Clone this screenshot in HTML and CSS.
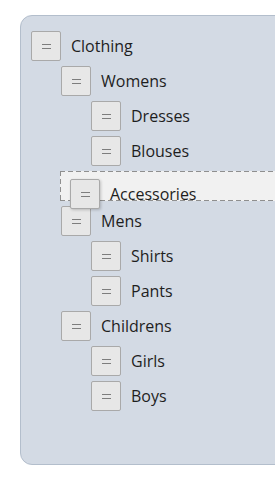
FILE: index.html
```html
<!DOCTYPE html>
<html>
<head>
	<meta charset="utf-8">
	<title>Nestable list</title>
	<link rel="stylesheet" href="styles.css">
</head>
<body>
	<div class="panel">
		<ol class="tree">
			<li>
				<div class="item"><span class="handle"></span><span class="label">Clothing</span></div>
				<ol class="tree">
					<li>
						<div class="item"><span class="handle"></span><span class="label">Womens</span></div>
						<ol class="tree">
							<li><div class="item"><span class="handle"></span><span class="label">Dresses</span></div></li>
							<li><div class="item"><span class="handle"></span><span class="label">Blouses</span></div></li>
						</ol>
					</li>
					<li class="placeholder"></li>
					<li>
						<div class="item"><span class="handle"></span><span class="label">Mens</span></div>
						<ol class="tree">
							<li><div class="item"><span class="handle"></span><span class="label">Shirts</span></div></li>
							<li><div class="item"><span class="handle"></span><span class="label">Pants</span></div></li>
						</ol>
					</li>
					<li>
						<div class="item"><span class="handle"></span><span class="label">Childrens</span></div>
						<ol class="tree">
							<li><div class="item"><span class="handle"></span><span class="label">Girls</span></div></li>
							<li><div class="item"><span class="handle"></span><span class="label">Boys</span></div></li>
						</ol>
					</li>
				</ol>
			</li>
		</ol>
	</div>

	<div class="item dragging"><span class="handle"></span><span class="label">Accessories</span></div>
</body>
</html>
```

FILE: styles.css
```css
html, body {
	margin:0;
	padding:0;
	overflow:hidden;
	background:#fff;
}
body {
	font-family:"Open Sans", "Noto Sans", sans-serif;
	font-size:16px;
	color:#1e1e1e;
	position:relative;
	width:275px;
	height:482px;
}
.panel {
	box-sizing:border-box;
	margin:15px 0 0 20px;
	width:300px;
	height:450px;
	padding:15px 0 0 10px;
	background:#d3dae4;
	border:1px solid #b3becc;
	border-radius:12px;
}
.tree {
	list-style:none;
	margin:0;
	padding:0;
}
.tree .tree {
	padding-left:30px;
}
.item {
	display:flex;
	align-items:center;
	height:30px;
	margin-bottom:5px;
}
.handle {
	box-sizing:border-box;
	flex:none;
	display:flex;
	align-items:center;
	justify-content:center;
	width:30px;
	height:30px;
	background:#e7e7e7;
	border:1px solid #a9a9a9;
	border-radius:2px;
}
.handle:before {
	content:'';
	width:9px;
	height:3px;
	margin-top:1px;
	border-top:1px solid #7d7d7d;
	border-bottom:1px solid #7d7d7d;
}
.label {
	margin-left:10px;
	white-space:nowrap;
}
/* drop target, dashes drawn as gradients to get longer dashes */
.placeholder {
	height:30px;
	margin:0 0 5px -1px;
	background:
		repeating-linear-gradient(90deg, #8f8f8f 0 5px, transparent 5px 8px) left top / 100% 1px no-repeat,
		repeating-linear-gradient(90deg, #8f8f8f 0 5px, transparent 5px 8px) left bottom / 100% 1px no-repeat,
		repeating-linear-gradient(180deg, #8f8f8f 0 5px, transparent 5px 8px) left top / 1px 100% no-repeat,
		#f1f1f1;
}
.dragging {
	position:absolute;
	left:70px;
	top:179px;
	margin:0;
}
.dragging .handle {
	box-shadow:1px 1px 3px rgba(0,0,0,.2);
}
```
